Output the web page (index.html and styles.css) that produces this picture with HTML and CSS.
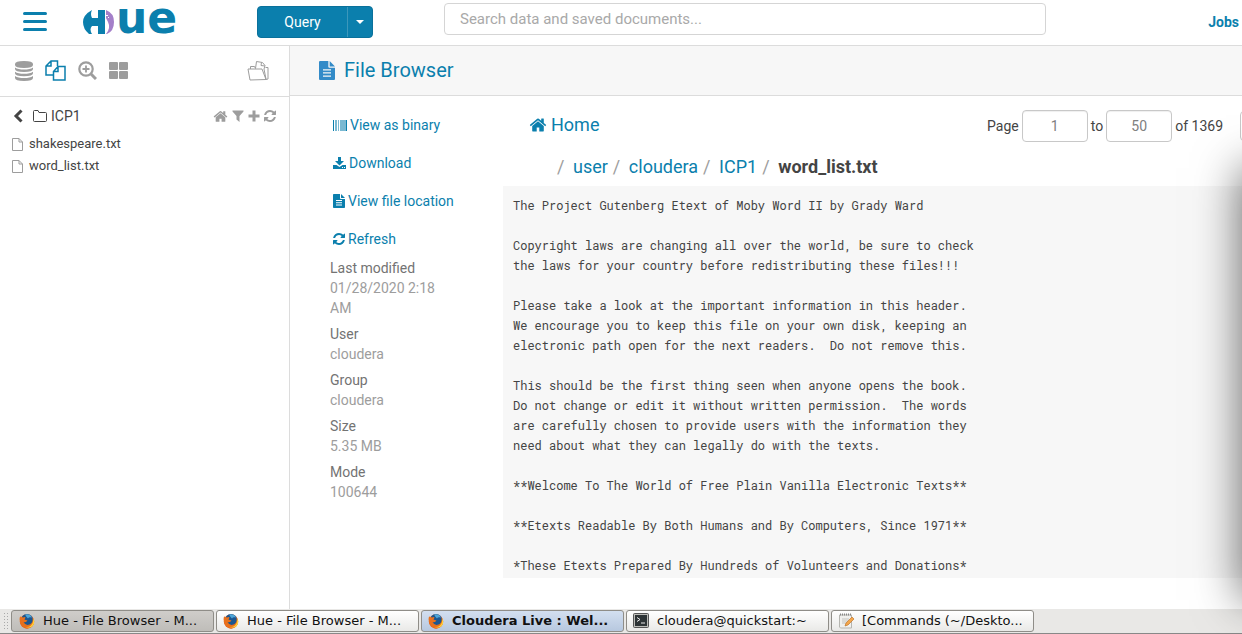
FILE: index.html
```html
<!DOCTYPE html>
<html lang="en">
<head>
<meta charset="utf-8">
<title>Hue - File Browser</title>
<link rel="stylesheet" href="styles.css">
</head>
<body>
<svg class="defs" aria-hidden="true">
  <symbol id="home" viewBox="0 0 1792 1792"><path d="M1472 992v480q0 26-19 45t-45 19h-384v-384h-256v384h-384q-26 0-45-19t-19-45v-480q0-1 .5-3t.5-3l575-474 575 474q1 2 1 6zm223-69l-62 74q-8 9-21 11h-3q-13 0-21-7l-692-577-692 577q-12 8-24 7-13-2-21-11l-62-74q-8-10-7-23.5t11-21.5l719-599q32-26 76-26t76 26l244 204v-195q0-14 9-23t23-9h192q14 0 23 9t9 23v408l219 182q10 8 11 21.5t-7 23.5z"/></symbol>
  <symbol id="refresh" viewBox="128 128 1536 1536"><path d="M1639 1056q0 5-1 7-64 268-268 434.500t-478 166.500q-146 0-282.500-55t-243.500-157l-129 129q-19 19-45 19t-45-19-19-45v-448q0-26 19-45t45-19h448q26 0 45 19t19 45-19 45l-137 137q71 66 161 102t187 36q134 0 250-65t186-179q11-17 53-117 8-23 30-23h192q13 0 22.500 9.500t9.500 22.500zm25-800v448q0 26-19 45t-45 19h-448q-26 0-45-19t-19-45 19-45l138-138q-148-137-349-137-134 0-250 65t-186 179q-11 17-53 117-8 23-30 23h-199q-13 0-22.500-9.500t-9.500-22.500v-7q65-268 270-434.500t480-166.500q146 0 284 55.500t245 156.500l130-129q19-19 45-19t45 19 19 45z"/></symbol>
  <symbol id="filetext" viewBox="0 0 12 14" preserveAspectRatio="none"><path fill-rule="evenodd" d="M.8 0H7v4.200q0 .8.800.8H12v8.200q0 .8-.8.800H.800Q0 14 0 13.200V.8Q0 0 .8 0ZM8 0l4 4H8ZM3 6v1h6V6ZM3 8.300v1h6v-1ZM3 10.600v1h6v-1Z"/></symbol>
  <symbol id="page" viewBox="0 0 11 13"><path fill="none" stroke="currentColor" d="M.5.5h6.500l3.500 3.500v8.500H.500ZM7 .5V4h3.500"/></symbol>
  <symbol id="firefox" viewBox="0 0 16 16"><circle cx="8" cy="8.500" r="7.200" fill="#e5601c"/><circle cx="8" cy="7" r="6" fill="#1c568f"/><path d="M6 1.500q5-1 7 3-3-1-4 1-2-2-3-4" fill="#4ca5d8"/><path d="M1 3.500q2 .5 3 1 2-1 2.500 0l-1 2q2 1 3 .5-1 3-4 2 2 4 6 2.500 4-2 3-7 3 6-1 9.500-5 3-9-.5Q-.500 9 1 3.500" fill="#e8701c"/><path d="M14 5q1 5-2 7.500-3 2.500-7 1 8 3 10-3 .7-3-1-5.500" fill="#ffd23b"/></symbol>
</svg>

<header class="topbar">
  <button class="menu" aria-label="Menu"><span></span><span></span><span></span></button>
  <a class="logo" href="#" aria-label="Hue">
    <svg viewBox="0 0 32 24" width="32" height="24">
      <path fill="#0b7fad" d="M9 0Q7 4 9 8h6V0h7v24h-7v-8H9q-3 3 0 8H6Q0 19 0 12T9 0Z"/>
      <path fill="#a47fc9" d="M23 0q8 3 8 12t-7 12h-1q5-6 2-12l-2-4Z"/>
      <path fill="#fff" d="M23 5h2v1h-2ZM25 7h1v1h-1Z"/>
    </svg>
    <span class="wordmark">ue</span>
  </a>
  <div class="query">
    <button class="query-main">Query</button><button class="query-more" aria-label="More query types"><svg width="8" height="4" viewBox="0 0 8 4"><path d="M0 0h8L4 4Z"/></svg></button>
  </div>
  <input class="search" type="text" aria-label="Search" placeholder="Search data and saved documents...">
  <a class="jobs" href="#">Jobs</a>
</header>

<div class="workspace">
  <aside class="sidebar">
    <nav class="sources">
      <button aria-label="Databases"><svg width="18" height="20" viewBox="0 0 18 20"><path d="M0 3q0-3 9-3t9 3v1q0 3-9 3T0 4ZM0 6.500q3 2 9 2t9-2V8q0 3-9 3T0 8ZM0 10.800q3 2 9 2t9-2v1.500q0 3-9 3t-9-3ZM0 15q3 2 9 2t9-2v2q0 3-9 3t-9-3Z"/></svg></button>
      <button class="active" aria-label="Files"><svg class="line" width="21" height="21" viewBox="0 0 21 21" stroke-width="1.500"><path d="M8 15H1V6l5-5h6.500v5M6 1v5H1M8.500 20V11.500l4.500-5h7V20ZM13 6.500v5H8.500"/></svg></button>
      <button aria-label="Search"><svg class="line" width="19" height="19" viewBox="0 0 19 19"><circle cx="8" cy="8" r="6.700" stroke-width="2.200"/><path d="m13 13 5 5" stroke-width="3"/><path d="M8 4.500v7M4.500 8h7" stroke-width="1.800"/></svg></button>
      <button aria-label="Dashboard"><svg width="19" height="17" viewBox="0 0 19 17"><rect width="9" height="8" rx="1"/><rect x="10" width="9" height="8" rx="1"/><rect y="9" width="9" height="8" rx="1"/><rect x="10" y="9" width="9" height="8" rx="1"/></svg></button>
      <button class="documents" aria-label="Documents"><svg class="line" width="22" height="20" viewBox="0 0 22 20"><path d="M3 19 1 8h14l4 10.500ZM3.500 8V5.500h4l1 2M19 18.500l2-.5V6.500h-2.500M8.500 7.500 9.500.5l6 1 2.500 3-1 3.500 2 10M14.500 1.500l-.5 3 4 .5"/></svg></button>
    </nav>
    <div class="folder">
      <button aria-label="Back"><svg class="line" width="10" height="14" viewBox="0 0 10 14"><path d="M8.500 1.500 3 7l5.500 5.500" stroke-width="3"/></svg></button>
      <svg class="line" width="14" height="12" viewBox="0 0 14 12"><path d="M.5 1.500q0-1 1-1H5l1 2h6.500q1 0 1 1v7q0 1-1 1h-11q-1 0-1-1Z"/></svg>
      <span>ICP1</span>
      <div class="tools">
        <button aria-label="Home"><svg width="15" height="15"><use href="#home"/></svg></button>
        <button aria-label="Filter"><svg width="12" height="12" viewBox="0 0 12 12"><path d="M.5.5h11v1L7.500 6v6l-3-2.500V6l-4-4.500Z"/></svg></button>
        <button aria-label="Add"><svg width="12" height="12" viewBox="0 0 12 12"><path d="M4.500.500h3v4H11.500v3h-4v4h-3v-4H.500v-3h4Z"/></svg></button>
        <button aria-label="Refresh"><svg width="12" height="12"><use href="#refresh"/></svg></button>
      </div>
    </div>
    <ul class="files">
      <li><svg width="11" height="13"><use href="#page"/></svg><a href="#">shakespeare.txt</a></li>
      <li><svg width="11" height="13"><use href="#page"/></svg><a href="#">word_list.txt</a></li>
    </ul>
  </aside>

  <main class="main">
    <h1 class="title"><svg width="16" height="19"><use href="#filetext"/></svg>File Browser</h1>
    <div class="content">
      <section class="details">
        <a href="#"><svg width="14" height="11" viewBox="0 0 14 11"><path d="M0 0h1v11H0ZM13 0h1v11h-1Z"/><path fill="#7ab9d2" d="M2 0h2v11H2ZM5 0h1v11H5ZM7 0h6v11H7Z"/></svg>View as binary</a>
        <a href="#"><svg width="13" height="12" viewBox="0 0 13 12"><path fill-rule="evenodd" d="M5 0h3v4h3L6.500 8.500 2 4h3ZM0 8h3.500l3 2 3-2H13v4H0ZM9 10v1h1v-1ZM11 10v1h1v-1Z"/></svg>Download</a>
        <a href="#"><svg width="12" height="14"><use href="#filetext"/></svg>View file location</a>
        <a href="#"><svg width="12" height="12"><use href="#refresh"/></svg>Refresh</a>
        <dl>
          <dt>Last modified</dt><dd>01/28/2020 2:18 AM</dd>
          <dt>User</dt><dd>cloudera</dd>
          <dt>Group</dt><dd>cloudera</dd>
          <dt>Size</dt><dd>5.35 MB</dd>
          <dt>Mode</dt><dd>100644</dd>
        </dl>
      </section>

      <section class="viewer">
        <div class="viewer-top">
          <a class="home-link" href="#"><svg width="18" height="18"><use href="#home"/></svg>Home</a>
          <div class="pager">
            <label for="from">Page</label><input id="from" type="text" value="1">
            <label for="to">to</label><input id="to" type="text" value="50">
            <span>of 1369</span>
          </div>
          <button class="pager-prev" aria-label="Previous page"></button>
        </div>
        <nav class="crumbs">
          <span class="sep">/</span><a href="#">user</a><span class="sep">/</span><a href="#">cloudera</a><span class="sep">/</span><a href="#">ICP1</a><span class="sep">/</span><strong>word_list.txt</strong>
        </nav>
        <pre class="text">The Project Gutenberg Etext of Moby Word II by Grady Ward

Copyright laws are changing all over the world, be sure to check
the laws for your country before redistributing these files!!!

Please take a look at the important information in this header.
We encourage you to keep this file on your own disk, keeping an
electronic path open for the next readers.  Do not remove this.

This should be the first thing seen when anyone opens the book.
Do not change or edit it without written permission.  The words
are carefully chosen to provide users with the information they
need about what they can legally do with the texts.

**Welcome To The World of Free Plain Vanilla Electronic Texts**

**Etexts Readable By Both Humans and By Computers, Since 1971**

*These Etexts Prepared By Hundreds of Volunteers and Donations*</pre>
      </section>
    </div>
  </main>
</div>

<footer class="taskbar">
  <span class="grip"></span>
  <button class="task pressed"><svg width="16" height="16"><use href="#firefox"/></svg><span>Hue - File Browser - M...</span></button>
  <button class="task"><svg width="16" height="16"><use href="#firefox"/></svg><span>Hue - File Browser - M...</span></button>
  <button class="task alert"><svg width="16" height="16"><use href="#firefox"/></svg><span>Cloudera Live : Wel...</span></button>
  <button class="task"><svg width="16" height="16" viewBox="0 0 16 16"><rect x=".5" y=".5" width="15" height="14" rx="1" fill="#bdbdb9" stroke="#555"/><rect x="2" y="2" width="12" height="11" fill="#2e3436"/><path d="m4 4.500 3 2-3 2M8 10h4" fill="none" stroke="#e8e8e8"/></svg><span>cloudera@quickstart:~</span></button>
  <button class="task"><svg width="16" height="16" viewBox="0 0 16 16"><path d="M1.500 2h12v13h-11l-1-1Z" fill="#f0f0ee" stroke="#b5b5b0"/><path d="M2 1.500h11" stroke="#888" stroke-dasharray="1 1" stroke-width="2"/><path d="M4 6h7M4 8h6M4 10h4" stroke="#c4c4c0"/><path d="m7 13 1-3 6-6 2 2-6 6Z" fill="#f3a64b" stroke="#b8691d" stroke-width=".6"/></svg><span>[Commands (~/Deskto...</span></button>
</footer>

<div class="edge" aria-hidden="true"><div class="edge-shadow"></div></div>
</body>
</html>
```
FILE: styles.css
```css
* { box-sizing: border-box; }

body {
  margin: 0;
  min-height: 100vh;
  display: flex;
  flex-direction: column;
  background: #fff;
  color: #444;
  font: 14px/20px Roboto, "Liberation Sans", sans-serif;
  overflow-x: hidden;
}

a { color: #0b7fad; text-decoration: none; }
svg { fill: currentColor; flex: none; display: block; }
svg.line { fill: none; stroke: currentColor; }
button, input { font: inherit; margin: 0; }
button { border: 0; padding: 0; background: none; color: inherit; }
.defs { position: absolute; width: 0; height: 0; }

.topbar {
  display: flex;
  align-items: center;
  height: 46px;
  padding: 0 3px 2px 23px;
  border-bottom: 1px solid #dcdcdc;
}
.menu { display: flex; flex-direction: column; gap: 5px; width: 24px; }
.menu span { height: 3px; border-radius: 2px; background: #0b7fad; }
.logo { display: flex; align-items: center; gap: 1px; width: 98px; height: 42px; margin-left: 36px; }
.wordmark { padding-bottom: 8px; font: bold 44px/36px "DejaVu Sans", sans-serif; }

.query {
  display: flex;
  margin-left: 76px;
  width: 116px;
  height: 32px;
  border: 1px solid #0a719b;
  border-radius: 4px;
  background: #0b7fad;
  color: #fff;
}
.query-main { flex: 1; }
.query-more { width: 25px; display: grid; place-items: center; border-left: 1px solid #3c97bb; }

.search {
  flex: 1;
  align-self: flex-start;
  height: 32px;
  margin: 3px 162px 0 71px;
  padding: 0 15px;
  border: 1px solid #d5d5d5;
  border-radius: 4px;
  font-size: 15px;
}
.search::placeholder { color: #a9a9a9; }
.jobs { font-weight: 700; }

.workspace { flex: 1; display: flex; }

.sidebar { width: 290px; flex: none; border-right: 1px solid #dcdcdc; }
.sources {
  display: flex;
  align-items: center;
  gap: 12px;
  height: 51px;
  padding: 0 20px 1px 15px;
  border-bottom: 1px solid #dcdcdc;
  color: #9d9d9d;
}
.sources .active { color: #0b7fad; }
.sources .documents { margin-left: auto; }
.folder {
  display: flex;
  align-items: center;
  gap: 4px;
  padding: 9px 13px 7px;
}
.folder > button { margin-right: 6px; }
.tools { display: flex; align-items: center; gap: 4px; margin-left: auto; color: #9d9d9d; }

.files { list-style: none; margin: 0; padding: 0 12px; font-size: 13px; }
.files li { display: flex; align-items: center; gap: 6px; height: 22px; color: #9d9d9d; }
.files a { color: #444; }

.main { flex: 1; min-width: 0; display: flex; flex-direction: column; }
.title {
  display: flex;
  align-items: center;
  gap: 9px;
  height: 50px;
  margin: 0;
  padding: 0 29px 1px;
  border-bottom: 1px solid #dcdcdc;
  background: #f7f7f7;
  color: #0b7fad;
  font-size: 20px;
  font-weight: 400;
}
.title svg { color: #338bc8; }

.content { flex: 1; display: flex; padding-top: 10px; }
.details { width: 213px; flex: none; padding: 0 50px 0 40px; }
.details a { display: flex; align-items: center; gap: 3px; padding: 9px 0 9px 3px; white-space: nowrap; }
.details dl { margin: 0; color: #737373; }
.details dd { margin: 0 0 6px; color: #9d9d9d; }

.viewer { flex: 1; min-width: 0; display: flex; flex-direction: column; }
.viewer-top { display: flex; align-items: center; height: 39px; padding-left: 26px; overflow: hidden; }
.home-link { display: flex; align-items: center; gap: 4px; padding-bottom: 1px; font-size: 18px; }
.pager { display: flex; align-items: center; gap: 3px; margin-left: auto; }
.pager input {
  width: 66px;
  height: 32px;
  border: 1px solid #c8c8c8;
  border-radius: 4px;
  background: #fff;
  box-shadow: inset 0 1px 1px #0001;
  color: #808080;
  text-align: center;
}
.pager-prev {
  width: 30px;
  height: 30px;
  margin: 0 -28px 0 17px;
  border: 1px solid #c8c8c8;
  border-radius: 4px;
}
.crumbs { display: flex; align-items: center; height: 41px; padding: 3px 0 0 54px; font-size: 18px; white-space: nowrap; }
.crumbs .sep { width: 16px; color: #9d9d9d; }
.crumbs a { margin-right: 5px; }

.text {
  flex: 1;
  margin: 0 0 31px;
  padding: 9px 10px 0;
  background: #f7f7f7;
  color: #444;
  font: 12px/20px "Roboto Mono", "DejaVu Sans Mono", monospace;
}

.taskbar {
  display: flex;
  gap: 2px;
  height: 25px;
  padding: 1px 3px;
  border-bottom: 1px solid #888;
  background: #e9e8e6;
  color: #111;
  font: 13px/18px "DejaVu Sans", sans-serif;
}
.grip { width: 6px; margin: 2px 0; background: radial-gradient(circle, #aaa 1px, #0000 1px) 0 0 / 3px 3px; }
.task {
  display: flex;
  align-items: center;
  flex: 0 1 203px;
  gap: 8px;
  height: 22px;
  padding: 0 6px;
  border: 1px solid #8f8d88;
  border-radius: 3px;
  background: linear-gradient(#fff, #e9e9e7);
  white-space: nowrap;
  overflow: hidden;
}
.task.pressed { background: linear-gradient(#cfcdca, #bfbdb9); padding-left: 7px; }
.task.alert { background: linear-gradient(#d3dff0, #b7c8df); font-weight: 700; }

/* Shadow cast from a window beyond the right edge */
.edge { position: fixed; inset: 0; overflow: hidden; pointer-events: none; }
.edge-shadow {
  position: absolute;
  left: 100%;
  top: 168px;
  bottom: 34px;
  width: 200px;
  box-shadow: 0 0 44px #0009;
}
```
